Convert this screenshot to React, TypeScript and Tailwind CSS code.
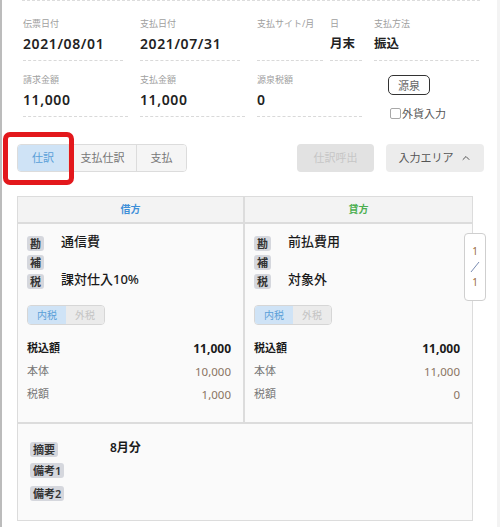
import { ChevronUp } from 'lucide-react';

type FieldProps = {
  label: string;
  value?: string;
  width: string;
  cjk?: boolean;
};

function Field({ label, value, width, cjk }: FieldProps) {
  return (
    <div className={`${width} h-[43px] border-b border-dashed border-[#d9d9d9]`}>
      <div className="h-[12px] whitespace-nowrap text-[9px] leading-[12px] text-[#a0a0a0]">{label}</div>
      <div
        className={`mt-[4px] h-[20px] whitespace-nowrap font-semibold leading-[20px] text-[#222] ${
          cjk ? 'text-[12.5px]' : 'text-[14px] tracking-[0.6px]'
        }`}
      >
        {value}
      </div>
    </div>
  );
}

function Badge({ children }: { children: React.ReactNode }) {
  return (
    <span className="inline-flex h-[15px] min-w-[17px] items-center justify-center rounded-[3px] bg-[#d5d7dd] px-[3px] text-[11px] font-semibold leading-none text-[#333]">
      {children}
    </span>
  );
}

type SideProps = {
  account: string;
  tax: string;
  total: string;
  body: string;
  taxAmount: string;
};

function SideCell({ account, tax, total, body, taxAmount }: SideProps) {
  const rows: [string, string][] = [
    ['勘', account],
    ['補', ''],
    ['税', tax],
  ];
  return (
    <div className="flex flex-col bg-[#fafafa] pb-[16px] pl-[9px] pr-[12px] pt-[10px]">
      <div className="flex flex-col gap-[4px]">
        {rows.map(([k, v]) => (
          <div key={k} className="flex h-[15px] items-center">
            <div className="w-[34px]">
              <Badge>{k}</Badge>
            </div>
            <span className="text-[13px] font-medium leading-[15px] text-[#1a1a1a]">{v}</span>
          </div>
        ))}
      </div>
      <div className="mt-[18px] flex h-[20px] w-[78px] overflow-hidden rounded-[4px] border border-[#d6d6d6] text-[10px]">
        <div className="flex flex-1 items-center justify-center bg-[#cfe3f6] text-[#5a9fd8]">内税</div>
        <div className="flex flex-1 items-center justify-center bg-[#ebebeb] text-[#c4c4c4]">外税</div>
      </div>
      <div className="mt-[12px] flex flex-col text-[11px]">
        <div className="flex h-[23px] items-center justify-between font-bold text-[#1a1a1a]">
          <span>税込額</span>
          <span className="text-[12px]">{total}</span>
        </div>
        <div className="flex h-[23px] items-center justify-between text-[#777]">
          <span>本体</span>
          <span className="text-[11.5px] text-[#8a7462]">{body}</span>
        </div>
        <div className="flex h-[23px] items-center justify-between text-[#777]">
          <span>税額</span>
          <span className="text-[11.5px] text-[#8a7462]">{taxAmount}</span>
        </div>
      </div>
    </div>
  );
}

export default function App() {
  return (
    <div
      className="relative flex h-[527px] w-[500px] overflow-hidden border-l-2 border-[#bcbcbc] bg-white"
      style={{ fontFamily: '"Noto Sans", "Noto Sans CJK JP", sans-serif' }}
    >
      <div className="flex flex-1 flex-col">
        {/* header fields */}
        <div className="ml-[20px] w-[458px] border-t border-dashed border-[#dcdcdc]" />
        <div className="mt-[17px] flex items-start pl-[21px]">
          <Field label="伝票日付" value="2021/08/01" width="w-[100px]" />
          <div className="ml-[17px]">
            <Field label="支払日付" value="2021/07/31" width="w-[100px]" />
          </div>
          <div className="ml-[17px]">
            <Field label="支払サイト/月" width="w-[66px]" />
          </div>
          <div className="ml-[7px]">
            <Field label="日" value="月末" width="w-[32px]" cjk />
          </div>
          <div className="ml-[12px]">
            <Field label="支払方法" value="振込" width="w-[105px]" cjk />
          </div>
        </div>
        <div className="mt-[13px] flex items-start pl-[21px]">
          <Field label="請求金額" value="11,000" width="w-[105px]" />
          <div className="ml-[12px]">
            <Field label="支払金額" value="11,000" width="w-[105px]" />
          </div>
          <div className="ml-[12px]">
            <Field label="源泉税額" value="0" width="w-[105px]" />
          </div>
          <div className="ml-[26px] flex h-[43px] flex-col items-start pt-[1px]">
            <button className="flex h-[20px] w-[42px] shrink-0 items-center justify-center rounded-[5px] border border-[#333] bg-white text-[11px] leading-none text-[#666]">
              源泉
            </button>
            <label className="ml-[2px] mt-[13px] flex h-[11px] shrink-0 items-center gap-[1px] text-[11px] leading-[11px] text-[#555]">
              <span className="h-[11px] w-[11px] rounded-[2px] border border-[#a8a8a8] bg-white" />
              外貨入力
            </label>
          </div>
        </div>

        {/* tabs + buttons */}
        <div className="mt-[27px] flex h-[28px] items-center pl-[15px] pr-[13px]">
          <div className="flex h-[28px] overflow-hidden rounded-[4px] border border-[#dcdcdc] text-[11px]">
            <div className="flex w-[50px] items-center justify-center bg-[#cfe3f6] text-[#5a9fd8]">仕訳</div>
            <div className="flex w-[68px] items-center justify-center border-l border-[#dcdcdc] bg-[#f5f5f5] text-[#777]">
              支払仕訳
            </div>
            <div className="flex w-[50px] items-center justify-center border-l border-[#dcdcdc] bg-[#f5f5f5] text-[#777]">
              支払
            </div>
          </div>
          <div className="ml-auto flex gap-[12px]">
            <button className="flex h-[28px] w-[77px] items-center justify-center rounded-[4px] bg-[#e2e2e2] text-[11px] text-[#c6c6c6]">
              仕訳呼出
            </button>
            <button className="flex h-[28px] w-[98px] items-center justify-center gap-[6px] rounded-[4px] bg-[#ececec] text-[11px] text-[#555]">
              入力エリア
              <ChevronUp size={12} strokeWidth={2} className="text-[#555]" />
            </button>
          </div>
        </div>

        {/* journal table */}
        <div className="ml-[15px] mt-[24px] w-[456px] border border-[#dcdcdc]">
          <div className="grid h-[27px] grid-cols-2 border-b-2 border-[#dcdcdc] bg-[#f3f3f3] text-[10px] font-bold">
            <div className="flex items-center justify-center border-r-2 border-[#dcdcdc] text-[#3e8fd8]">借方</div>
            <div className="flex items-center justify-center text-[#4caf50]">貸方</div>
          </div>
          <div className="grid grid-cols-2">
            <div className="border-r-2 border-[#dcdcdc]">
              <SideCell account="通信費" tax="課対仕入10%" total="11,000" body="10,000" taxAmount="1,000" />
            </div>
            <SideCell account="前払費用" tax="対象外" total="11,000" body="11,000" taxAmount="0" />
          </div>
          <div className="flex h-[98px] flex-col gap-[8px] border-t-2 border-[#dcdcdc] bg-[#fafafa] pl-[12px] pt-[16px]">
            <div className="flex h-[15px] items-center">
              <div className="w-[80px]">
                <Badge>摘要</Badge>
              </div>
              <span className="text-[12px] font-semibold text-[#1a1a1a]">8月分</span>
            </div>
            <div className="flex h-[15px] items-center">
              <Badge>備考1</Badge>
            </div>
            <div className="flex h-[15px] items-center">
              <Badge>備考2</Badge>
            </div>
          </div>
        </div>
      </div>
      <div className="w-[3px] bg-[#f3f3f3]" />

      {/* page indicator */}
      <div className="absolute left-[462px] top-[233px] flex h-[68px] w-[22px] flex-col items-center justify-center rounded-[4px] border border-[#cfcfcf] bg-white text-[10px] text-[#9a6a3a]">
        <span>1</span>
        <svg width="10" height="12" viewBox="0 0 10 12" className="my-[2px]">
          <line x1="1" y1="11" x2="9" y2="1" stroke="#6a7fa8" strokeWidth="0.9" />
        </svg>
        <span>1</span>
      </div>

      {/* highlight annotation */}
      <div className="absolute left-[1px] top-[132px] h-[53px] w-[71px] rounded-[7px] border-[5px] border-[#e3181c]" />
    </div>
  );
}
